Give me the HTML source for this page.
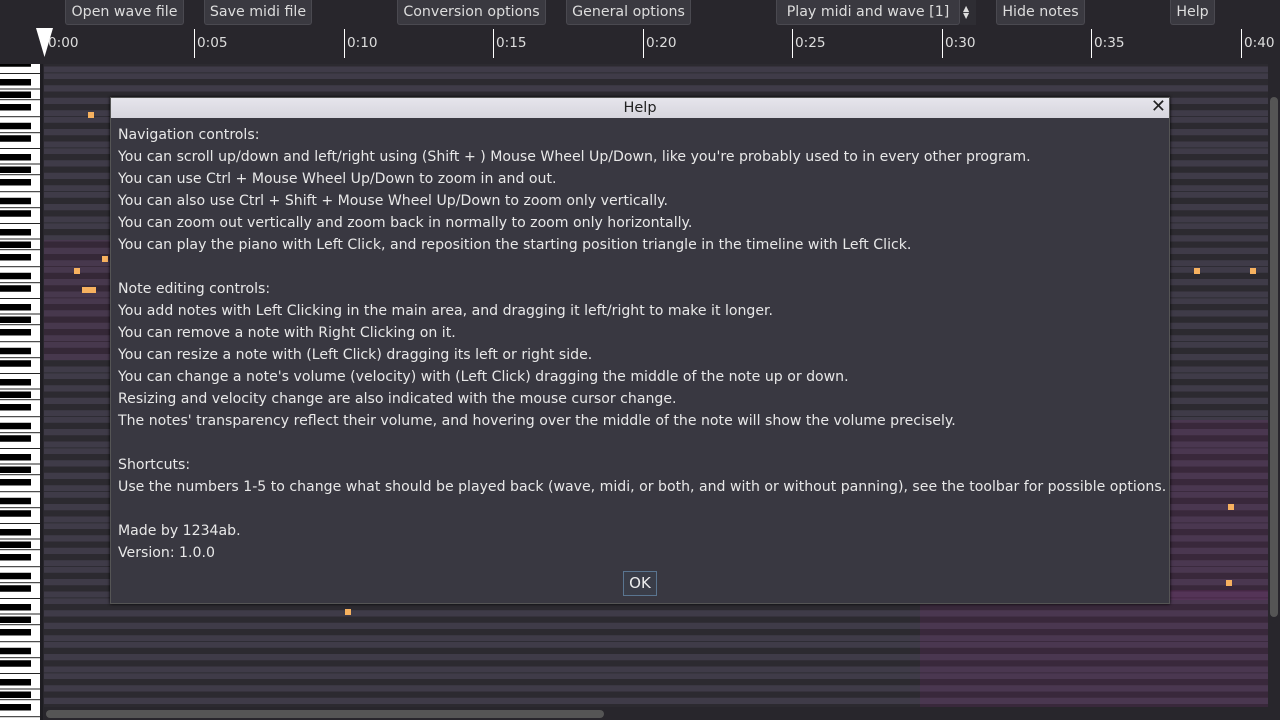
<!DOCTYPE html>
<html><head><style>
*{margin:0;padding:0;box-sizing:border-box}
body{width:1280px;height:720px;background:#28262c;font-family:"DejaVu Sans","Liberation Sans",sans-serif;overflow:hidden;position:relative;color:#e6e6e6}
.btn{position:absolute;top:0;height:25px;background:#3a3940;border:1px solid #4a4950;border-top:none;border-radius:0 0 3px 3px;color:#ddd;font-size:14.2px;line-height:24px;text-align:center;white-space:nowrap}
.tick{position:absolute;top:29px;width:1px;height:29px;background:#fff}
.tl{position:absolute;top:35px;font-size:13.6px;color:#ddd}
#dlg{position:absolute;left:110px;top:97px;width:1060px;height:507px;background:#393841;border:1px solid #555;box-shadow:0 0 3px #000}
#tb{height:20px;background:linear-gradient(#e6e5ec,#d6d5dd);color:#222;font-size:14.5px;text-align:center;line-height:20px}
#txt{position:absolute;left:7px;top:26px;font-size:14.1px;line-height:22px;color:#e8e8e8;white-space:pre}
#ok{position:absolute;left:512px;top:473px;width:34px;height:25px;background:#3a3d48;border:1px solid #5a7590;font-size:15px;line-height:23px;text-align:center;color:#eee}
.n{position:absolute;width:6px;height:6px;background:#f6b15f}
.h{position:absolute;background:rgba(160,30,140,0.12)}
</style></head><body>
<div class="btn" style="left:65px;width:119px">Open wave file</div>
<div class="btn" style="left:204px;width:108px">Save midi file</div>
<div class="btn" style="left:397px;width:149px">Conversion options</div>
<div class="btn" style="left:566px;width:125px">General options</div>
<div class="btn" style="left:776px;width:184px">Play midi and wave [1]</div>
<div style="position:absolute;left:960px;top:0;width:16px;height:25px;background:#2e2d33"></div>
<div style="position:absolute;left:963px;top:5px;font-size:8px;line-height:7px;color:#ddd">▲<br>▼</div>
<div class="btn" style="left:996px;width:89px">Hide notes</div>
<div class="btn" style="left:1170px;width:45px">Help</div>
<svg style="position:absolute;left:36px;top:28px" width="18" height="30"><polygon points="0,0 17,0 8.5,29" fill="#fff"/></svg>
<div class="tl" style="left:48px">0:00</div>
<div class="tick" style="left:194px"></div><div class="tl" style="left:197px">0:05</div>
<div class="tick" style="left:344px"></div><div class="tl" style="left:347px">0:10</div>
<div class="tick" style="left:493px"></div><div class="tl" style="left:496px">0:15</div>
<div class="tick" style="left:643px"></div><div class="tl" style="left:646px">0:20</div>
<div class="tick" style="left:792px"></div><div class="tl" style="left:795px">0:25</div>
<div class="tick" style="left:942px"></div><div class="tl" style="left:945px">0:30</div>
<div class="tick" style="left:1091px"></div><div class="tl" style="left:1094px">0:35</div>
<div class="tick" style="left:1241px"></div><div class="tl" style="left:1244px">0:40</div>
<svg style="position:absolute;left:0;top:64px" width="1280" height="656">
<defs>
<pattern id="r" patternUnits="userSpaceOnUse" x="0" y="15" width="1280" height="75">
<rect width="1280" height="75" fill="#3f3b48"/>
<rect y="0" width="1280" height="6.25" fill="#2c2a30"/>
<rect y="12.5" width="1280" height="6.25" fill="#2c2a30"/>
<rect y="25" width="1280" height="6.25" fill="#2c2a30"/>
<rect y="43.75" width="1280" height="6.25" fill="#2c2a30"/>
<rect y="56.25" width="1280" height="6.25" fill="#2c2a30"/>
<rect y="37.2" width="1280" height="0.8" fill="#2a282e"/>
<rect y="68.5" width="1280" height="0.8" fill="#2a282e"/>
</pattern>
<pattern id="p" patternUnits="userSpaceOnUse" x="0" y="15" width="40" height="75">
<rect width="40" height="75" fill="#fff"/>
<rect y="9.5" width="40" height="1" fill="#222"/>
<rect y="20.2" width="40" height="1" fill="#222"/>
<rect y="37.2" width="40" height="1" fill="#222"/>
<rect y="53.2" width="40" height="1" fill="#222"/>
<rect y="69" width="40" height="1" fill="#222"/>
<rect y="0" width="31" height="6.5" fill="#000"/>
<rect y="12.5" width="31" height="6.5" fill="#000"/>
<rect y="25" width="31" height="6.5" fill="#000"/>
<rect y="43.75" width="31" height="6.5" fill="#000"/>
<rect y="56.25" width="31" height="6.5" fill="#000"/>
</pattern>
</defs>
<rect x="44" y="0" width="1224" height="643" fill="url(#r)"/>
<rect x="0" y="0" width="40" height="656" fill="url(#p)"/>
<rect x="40" y="0" width="3" height="656" fill="#1e1d22"/>
</svg>
<div class="h" style="left:920px;top:590px;width:348px;height:117px"></div>
<div class="h" style="left:1170px;top:420px;width:98px;height:180px"></div>
<div class="h" style="left:44px;top:240px;width:66px;height:120px;background:rgba(160,30,140,0.08)"></div>
<div class="n" style="left:88px;top:112px"></div>
<div class="n" style="left:345px;top:609px"></div>
<div class="n" style="left:1228px;top:504px"></div>
<div class="n" style="left:1226px;top:580px"></div>
<div class="n" style="left:82px;top:287px;width:14px"></div>
<div class="n" style="left:74px;top:268px"></div>
<div class="n" style="left:102px;top:256px"></div>
<div class="n" style="left:1194px;top:268px"></div>
<div class="n" style="left:1250px;top:268px"></div>
<div style="position:absolute;left:1270px;top:97px;width:8px;height:520px;background:#555;border-radius:4px"></div>
<div style="position:absolute;left:46px;top:710px;width:558px;height:8px;background:#555;border-radius:4px"></div>
<div id="dlg">
<div id="tb">Help<span style="position:absolute;right:3px;top:-1px;font-size:18px;font-weight:bold">✕</span></div>
<div id="txt">Navigation controls:
You can scroll up/down and left/right using (Shift + ) Mouse Wheel Up/Down, like you're probably used to in every other program.
You can use Ctrl + Mouse Wheel Up/Down to zoom in and out.
You can also use Ctrl + Shift + Mouse Wheel Up/Down to zoom only vertically.
You can zoom out vertically and zoom back in normally to zoom only horizontally.
You can play the piano with Left Click, and reposition the starting position triangle in the timeline with Left Click.

Note editing controls:
You add notes with Left Clicking in the main area, and dragging it left/right to make it longer.
You can remove a note with Right Clicking on it.
You can resize a note with (Left Click) dragging its left or right side.
You can change a note's volume (velocity) with (Left Click) dragging the middle of the note up or down.
Resizing and velocity change are also indicated with the mouse cursor change.
The notes' transparency reflect their volume, and hovering over the middle of the note will show the volume precisely.

Shortcuts:
Use the numbers 1-5 to change what should be played back (wave, midi, or both, and with or without panning), see the toolbar for possible options.

Made by 1234ab.
Version: 1.0.0</div>
<div id="ok">OK</div>
</div>
</body></html>
